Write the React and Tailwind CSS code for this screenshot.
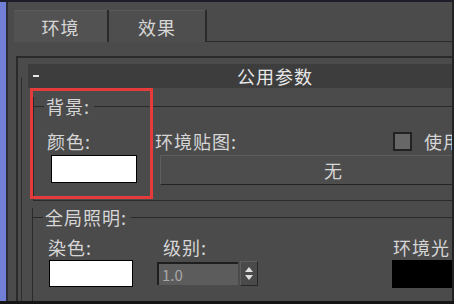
export default function App() {
  return (
    <div
      className="w-[454px] h-[304px] overflow-hidden flex flex-col bg-[#4b4b4b] text-[#d6d6d6]"
      style={{ fontFamily: '"Noto Sans CJK SC", "Noto Sans", sans-serif' }}
    >
      <div className="h-[2px] shrink-0 bg-[#1d1e2a]" />
      <div className="flex flex-1 min-h-0">
        <div className="w-[6px] bg-[#717fd6]" />
        <div className="w-[2px] bg-[#2c2c34]" />
        <main className="flex-1 min-w-0 flex flex-col overflow-hidden">
          <Tabs />
          <div className="mt-[14px] ml-[8px] flex flex-1 min-h-0 overflow-hidden border-l-2 border-t-2 border-[#2a2a2a]">
            <div className="ml-[3px] mt-[19px] w-px bg-[#2e2e2e]" />
            <div className="ml-[6px] pt-[6px] flex-1 min-w-0">
              <RolloutHeader title="公用参数" />
              <Background />
              <GlobalLighting />
            </div>
          </div>
        </main>
        <div className="w-[2px] bg-[#222]" />
      </div>
      <div className="h-[3px] shrink-0 bg-[#151515]" />
    </div>
  )
}

function Tabs() {
  return (
    <div className="mt-[8px] h-[32px] shrink-0 pl-[6px] flex items-stretch">
      <div className="w-[93px] bg-[#525252] border-t border-[#5c5c5c] flex items-center justify-center text-[18px] tracking-[1px] leading-none">
        环境
      </div>
      <div className="w-[2px] bg-[#2a2a2a]" />
      <div className="w-[96px] bg-[#4e4e4e] border-t border-[#5a5a5a] flex items-center justify-center text-[18px] tracking-[1px] leading-none">
        效果
      </div>
      <div className="w-[2px] bg-[#2a2a2a]" />
      <div className="flex-1 border-b border-[#2a2a2a]" />
    </div>
  )
}

function RolloutHeader({ title }) {
  return (
    <div className="w-[600px] h-[24px] bg-[#3d3d3d] flex items-center">
      <span className="ml-[5px] w-[6px] h-[2px] bg-[#e6e6e6]" />
      <span className="ml-[198px] text-[18px] tracking-[1px] leading-none text-[#e8e8e8]">{title}</span>
    </div>
  )
}

function GroupLabel({ label, tick }) {
  return (
    <div className="h-[18px] flex items-center">
      <div className="h-px bg-[#2a2a2a]" style={{ width: tick }} />
      <span className="ml-[2px] mr-[4px] text-[18px] tracking-[1px] leading-none">{label}</span>
      <div className="flex-1 h-px bg-[#2a2a2a]" />
    </div>
  )
}

function Background() {
  return (
    <div className="relative pt-[9px]">
      <div className="ml-[5px] w-[600px] border-l border-b border-[#2a2a2a] pb-[15px]">
        <GroupLabel label="背景:" tick={10} />
        <div className="mt-[16px] h-[20px] flex items-center text-[18px] tracking-[1px] leading-none">
          <span className="w-[121px] pl-[13px]">颜色:</span>
          <span className="w-[238px]">环境贴图:</span>
          <span className="w-[19px] h-[19px] border-2 border-[#222] bg-[#676767]" />
          <span className="ml-[12px]">使用</span>
        </div>
        <div className="mt-[4px] flex items-start">
          <div className="ml-[17px] w-[86px] h-[28px] bg-white border border-black" />
          <div className="ml-[23px] w-[346px] h-[30px] bg-[#4d4d4d] border-t border-l border-[#5e5e5e] border-b border-r border-b-[#242424] border-r-[#242424] flex items-center justify-center text-[18px] leading-none">
            无
          </div>
        </div>
      </div>
      <div className="absolute left-[2px] top-0 w-[123px] h-[111px] border-[3px] border-[#e53b3b]" />
    </div>
  )
}

function GlobalLighting() {
  return (
    <div className="mt-[7px] ml-[4px] w-[600px] border-l border-[#2a2a2a] pb-[20px]">
      <GroupLabel label="全局照明:" tick={10} />
      <div className="mt-[11px] h-[20px] flex items-center text-[18px] tracking-[1px] leading-none">
        <span className="w-[130px] pl-[15px]">染色:</span>
        <span className="w-[230px]">级别:</span>
        <span>环境光</span>
      </div>
      <div className="mt-[3px] flex items-start">
        <div className="ml-[16px] w-[84px] h-[27px] bg-white border border-black" />
        <div className="ml-[24px] mt-[2px] w-[81px] h-[23px] bg-[#5c5c5c] border-t-2 border-l-2 border-[#1e1e1e] flex items-center pl-[3px] text-[15px] leading-none text-[#a8a8a8]">
          1.0
        </div>
        <div className="ml-[2px] mt-[1px] w-[18px] h-[25px] bg-[#4a4a4a] border border-[#262626] border-t-[#5e5e5e] border-l-[#5e5e5e] flex flex-col items-center justify-center gap-[3px]">
          <svg width="8" height="5" viewBox="0 0 8 5"><path d="M4 0L8 5H0Z" fill="#e0e0e0" /></svg>
          <svg width="8" height="5" viewBox="0 0 8 5"><path d="M0 0H8L4 5Z" fill="#e0e0e0" /></svg>
        </div>
        <div className="ml-[134px] w-[100px] h-[28px] bg-black" />
      </div>
    </div>
  )
}
